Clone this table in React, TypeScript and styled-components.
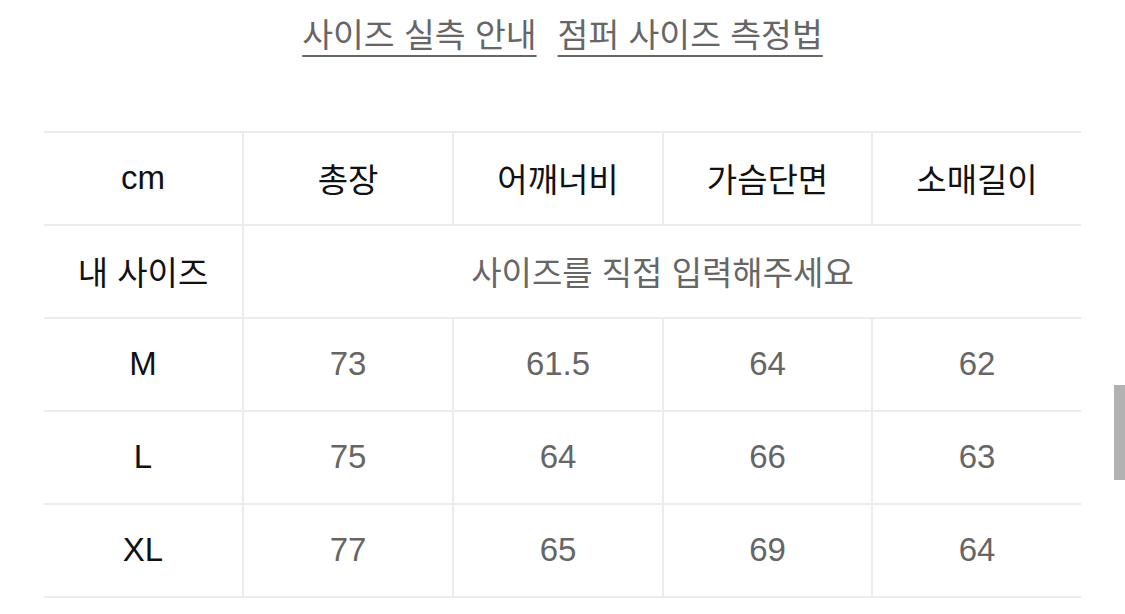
import React from "react";
import styled, { createGlobalStyle } from "styled-components";

const Global = createGlobalStyle`
  html, body { margin: 0; padding: 0; background: #fff; }
  body { font-family: "Liberation Sans", "Noto Sans CJK KR", sans-serif; overflow: hidden; }
`;

const Page = styled.div`
  position: relative;
  width: 1125px;
  height: 614px;
  padding: 0 44px;
  box-sizing: border-box;
  display: flex;
  flex-direction: column;
  align-items: center;
`;

const Links = styled.div`
  display: flex;
  gap: 21px;
  height: 131px;
  padding-top: 13px;
  box-sizing: border-box;
  align-items: flex-start;
`;

const LinkText = styled.a`
  font-size: 33.5px;
  line-height: 46px;
  color: #666;
  text-decoration: underline;
  text-decoration-thickness: 2px;
  text-underline-offset: 8px;
`;

const Table = styled.table`
  width: 1037px;
  border-collapse: collapse;
  table-layout: fixed;
`;

const Row = styled.tr`
  height: 93px;
  border-top: 2px solid #ececec;
  border-bottom: 2px solid #ececec;
`;

const Cell = styled.td<{ $head?: boolean }>`
  padding: 0 0 2px;
  text-align: center;
  vertical-align: middle;
  font-size: 33px;
  color: ${(p) => (p.$head ? "#111" : "#666")};
  border-left: 2px solid #ececec;
  &:first-child { border-left: none; }
`;

const Thumb = styled.div`
  position: absolute;
  right: 0;
  top: 385px;
  width: 11px;
  height: 95px;
  background: #b2b2b2;
`;

const sizes = [
  ["M", "73", "61.5", "64", "62"],
  ["L", "75", "64", "66", "63"],
  ["XL", "77", "65", "69", "64"],
];

export default function App() {
  return (
    <Page>
      <Global />
      <Links>
        <LinkText>사이즈 실측 안내</LinkText>
        <LinkText>점퍼 사이즈 측정법</LinkText>
      </Links>
      <Table>
        <colgroup>
          <col style={{ width: 199 }} />
          <col style={{ width: 210 }} />
          <col style={{ width: 210 }} />
          <col style={{ width: 209 }} />
          <col style={{ width: 209 }} />
        </colgroup>
        <tbody>
          <Row>
            <Cell $head>cm</Cell>
            <Cell $head>총장</Cell>
            <Cell $head>어깨너비</Cell>
            <Cell $head>가슴단면</Cell>
            <Cell $head>소매길이</Cell>
          </Row>
          <Row>
            <Cell $head>내 사이즈</Cell>
            <Cell colSpan={4}>사이즈를 직접 입력해주세요</Cell>
          </Row>
          {sizes.map((r) => (
            <Row key={r[0]}>
              <Cell $head>{r[0]}</Cell>
              {r.slice(1).map((v, i) => (
                <Cell key={i}>{v}</Cell>
              ))}
            </Row>
          ))}
        </tbody>
      </Table>
      <Thumb />
    </Page>
  );
}
